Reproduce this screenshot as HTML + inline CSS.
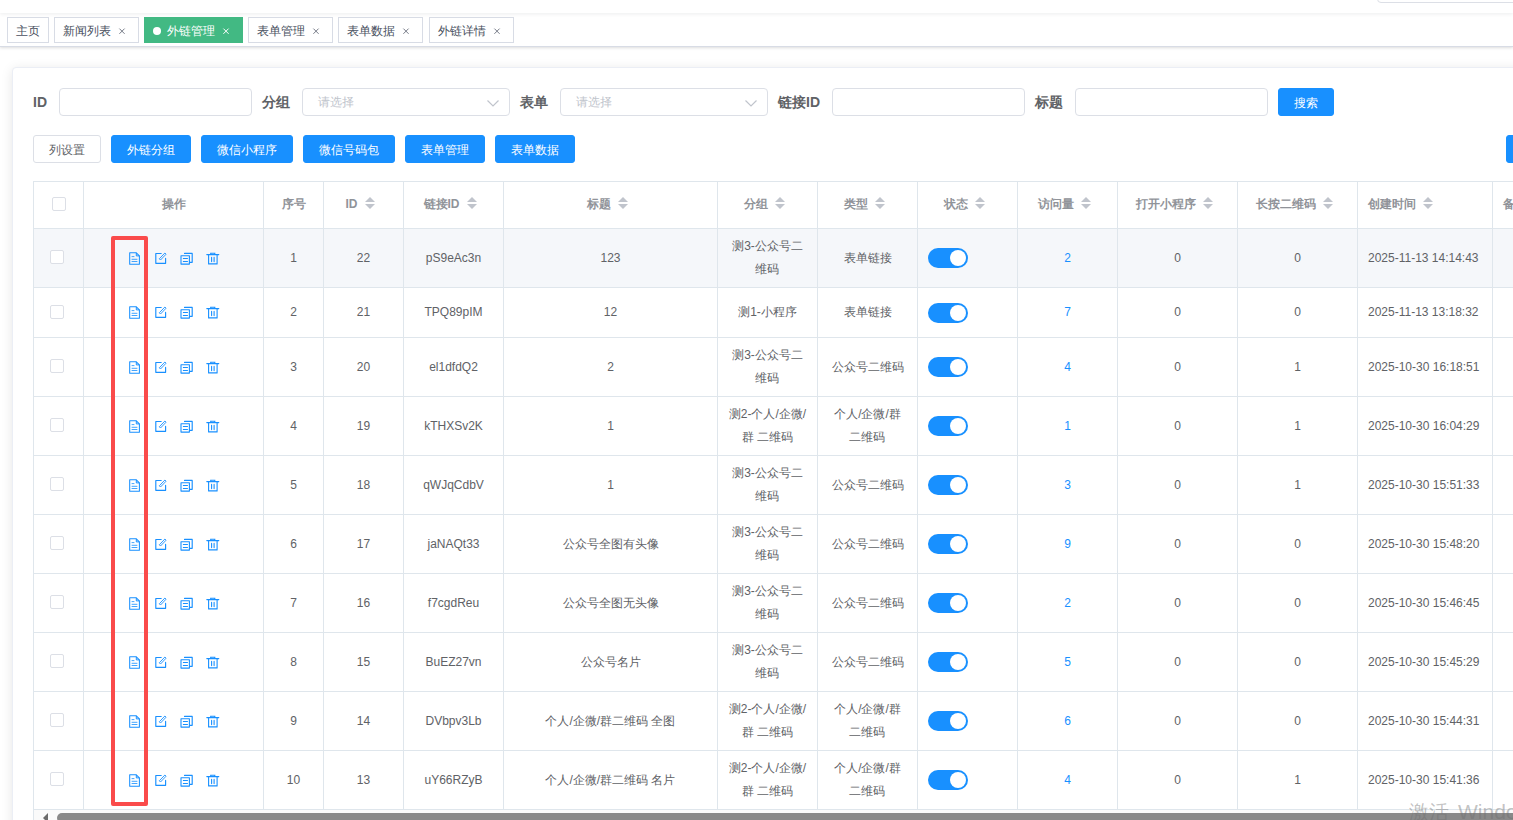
<!DOCTYPE html>
<html><head><meta charset="utf-8">
<style>
*{box-sizing:border-box;margin:0;padding:0}
html,body{width:1513px;height:820px;overflow:hidden;background:#fff;font-family:"Liberation Sans",sans-serif;color:#606266;font-size:12px}
.abs{position:absolute}
#nav{position:absolute;left:0;top:-37px;width:1513px;height:50px;background:#fff;box-shadow:0 1px 4px rgba(0,21,41,.08);z-index:2}
#topbox{position:absolute;left:1377px;top:-30px;width:200px;height:33px;border:1px solid #dcdfe6;border-radius:4px;background:#fff;z-index:3}
#tags{position:absolute;left:0;top:13px;width:1513px;height:34px;background:#fff;border-bottom:1px solid #d8dce5;box-shadow:0 1px 3px 0 rgba(0,0,0,.12),0 0 3px 0 rgba(0,0,0,.04)}
.tag{position:absolute;top:4px;height:26px;line-height:26px;border:1px solid #d8dce5;color:#495060;background:#fff;padding:0 8px;font-size:12px;white-space:nowrap}
.tag .x{position:absolute;right:8px;top:5px;width:16px;height:16px}
.tag.on{background:#42b983;border-color:#42b983;color:#fff}

.tag .dot{display:inline-block;width:8px;height:8px;border-radius:50%;background:#fff;margin-right:6px;vertical-align:0px}
#main{position:absolute;left:0;top:47px;width:1513px;height:773px;background:#fff}
#card{position:absolute;left:12px;top:67px;width:1560px;height:800px;border:1px solid #ebeef5;border-radius:4px;background:#fff;box-shadow:0 2px 12px 0 rgba(0,0,0,.1)}
.lbl{position:absolute;top:88px;height:28px;line-height:28px;font-size:14px;font-weight:bold;color:#606266}
.inp{position:absolute;top:88px;height:28px;border:1px solid #dcdfe6;border-radius:4px;background:#fff}
.ph{position:absolute;left:15px;top:0;line-height:26px;color:#c0c4cc;font-size:12px}
.arr{position:absolute;right:10px;top:11px}
.btn{position:absolute;top:135px;height:28px;line-height:28px;font-weight:500;border:1px solid #1890ff;background:#1890ff;color:#fff;border-radius:3px;text-align:center;font-size:12px}
.btn.def{background:#fff;border-color:#dcdfe6;color:#606266;font-weight:400}
.vl{position:absolute;width:1px;background:#dfe6ec}
.hl{position:absolute;height:1px;background:#dfe6ec}
.cell{position:absolute;display:flex;align-items:center;justify-content:center;text-align:center;line-height:23px;padding:0 10px;font-size:12px;color:#606266}
.cell.left{justify-content:flex-start;text-align:left}
.th{font-weight:bold;color:#909399}
.caret{display:inline-block;position:relative;width:24px;height:14px;vertical-align:middle}
.caret i{position:absolute;left:7px;width:0;height:0;border:5px solid transparent}
.caret i.up{top:-5px;border-bottom-color:#c0c4cc}
.caret i.dn{top:7px;border-top-color:#c0c4cc}
.cb{position:absolute;width:14px;height:14px;border:1px solid #dcdfe6;border-radius:2px;background:#fff}
.sw{position:absolute;width:40px;height:20px;border-radius:10px;background:#1890ff}
.sw:after{content:"";position:absolute;right:2px;top:2px;width:16px;height:16px;border-radius:50%;background:#fff}
.link{color:#1890ff}
.ico{position:absolute;line-height:0}
.ico svg{display:block}
#redbox{position:absolute;left:111px;top:236px;width:37px;height:570px;border:4px solid #fa4b4b;border-radius:2px}
#sbar{position:absolute;left:34px;top:810px;width:1479px;height:10px;background:#fafafa}
#thumb{position:absolute;left:57px;top:813px;width:1500px;height:10px;border-radius:5px;background:#898989}
#larr{position:absolute;left:43px;top:813px;width:0;height:0;border-top:5px solid transparent;border-bottom:5px solid transparent;border-right:5px solid #6b6b6b}
#wm{position:absolute;left:1409px;top:799px;font-size:20px;font-weight:300;color:rgba(110,110,110,.42);white-space:nowrap}
</style></head><body>
<div id="nav"></div><div id="topbox"></div>
<div id="main"></div>
<div id="tags">
 <div class="tag" style="left:7px;width:42px">主页</div>
 <div class="tag" style="left:54px;width:85px">新闻列表<svg class="x" viewBox="0 0 16 16"><path d="M5.4 5.6L10.6 10.8M10.6 5.6L5.4 10.8" stroke="#495060" stroke-width="1" opacity="0.75"/></svg></div>
 <div class="tag on" style="left:144px;width:99px"><span class="dot"></span>外链管理<svg class="x" viewBox="0 0 16 16"><path d="M5.4 5.6L10.6 10.8M10.6 5.6L5.4 10.8" stroke="#fff" stroke-width="1"/></svg></div>
 <div class="tag" style="left:248px;width:85px">表单管理<svg class="x" viewBox="0 0 16 16"><path d="M5.4 5.6L10.6 10.8M10.6 5.6L5.4 10.8" stroke="#495060" stroke-width="1" opacity="0.75"/></svg></div>
 <div class="tag" style="left:338px;width:85px">表单数据<svg class="x" viewBox="0 0 16 16"><path d="M5.4 5.6L10.6 10.8M10.6 5.6L5.4 10.8" stroke="#495060" stroke-width="1" opacity="0.75"/></svg></div>
 <div class="tag" style="left:429px;width:85px">外链详情<svg class="x" viewBox="0 0 16 16"><path d="M5.4 5.6L10.6 10.8M10.6 5.6L5.4 10.8" stroke="#495060" stroke-width="1" opacity="0.75"/></svg></div>
</div>
<div id="card"></div>

<div class="lbl" style="left:33px">ID</div><div class="inp" style="left:59px;width:193px"></div>
<div class="lbl" style="left:262px">分组</div><div class="inp" style="left:302px;width:208px"><span class="ph">请选择</span><svg class="arr" width="12" height="7" viewBox="0 0 12 7"><path d="M0.5 0.5L6 6 11.5 0.5" fill="none" stroke="#c0c4cc" stroke-width="1.2"/></svg></div>
<div class="lbl" style="left:520px">表单</div><div class="inp" style="left:560px;width:208px"><span class="ph">请选择</span><svg class="arr" width="12" height="7" viewBox="0 0 12 7"><path d="M0.5 0.5L6 6 11.5 0.5" fill="none" stroke="#c0c4cc" stroke-width="1.2"/></svg></div>
<div class="lbl" style="left:778px">链接ID</div><div class="inp" style="left:832px;width:193px"></div>
<div class="lbl" style="left:1035px">标题</div><div class="inp" style="left:1075px;width:193px"></div>
<div class="btn" style="left:1278px;top:88px;width:56px">搜索</div>
<div class="btn def" style="left:33px;width:68px">列设置</div>
<div class="btn" style="left:111px;width:80px">外链分组</div>
<div class="btn" style="left:201px;width:92px">微信小程序</div>
<div class="btn" style="left:303px;width:92px">微信号码包</div>
<div class="btn" style="left:405px;width:80px">表单管理</div>
<div class="btn" style="left:495px;width:80px">表单数据</div>
<div class="btn" style="left:1506px;width:80px"></div>
<div class="abs" style="left:34px;top:229px;width:1480px;height:58px;background:#f5f7fa"></div>
<div class="vl" style="left:33px;top:181px;height:629px"></div>
<div class="vl" style="left:83px;top:181px;height:629px"></div>
<div class="vl" style="left:263px;top:181px;height:629px"></div>
<div class="vl" style="left:323px;top:181px;height:629px"></div>
<div class="vl" style="left:403px;top:181px;height:629px"></div>
<div class="vl" style="left:503px;top:181px;height:629px"></div>
<div class="vl" style="left:717px;top:181px;height:629px"></div>
<div class="vl" style="left:817px;top:181px;height:629px"></div>
<div class="vl" style="left:917px;top:181px;height:629px"></div>
<div class="vl" style="left:1017px;top:181px;height:629px"></div>
<div class="vl" style="left:1117px;top:181px;height:629px"></div>
<div class="vl" style="left:1237px;top:181px;height:629px"></div>
<div class="vl" style="left:1357px;top:181px;height:629px"></div>
<div class="vl" style="left:1492px;top:181px;height:629px"></div>
<div class="hl" style="left:33px;top:181px;width:1480px"></div>
<div class="hl" style="left:33px;top:228px;width:1480px"></div>
<div class="hl" style="left:33px;top:287px;width:1480px"></div>
<div class="hl" style="left:33px;top:337px;width:1480px"></div>
<div class="hl" style="left:33px;top:396px;width:1480px"></div>
<div class="hl" style="left:33px;top:455px;width:1480px"></div>
<div class="hl" style="left:33px;top:514px;width:1480px"></div>
<div class="hl" style="left:33px;top:573px;width:1480px"></div>
<div class="hl" style="left:33px;top:632px;width:1480px"></div>
<div class="hl" style="left:33px;top:691px;width:1480px"></div>
<div class="hl" style="left:33px;top:750px;width:1480px"></div>
<div class="hl" style="left:33px;top:809px;width:1480px"></div>
<div class="cb" style="left:52px;top:197px"></div>
<div class="cell th" style="left:84px;top:181px;width:179px;height:46px">操作</div>
<div class="cell th" style="left:264px;top:181px;width:59px;height:46px">序号</div>
<div class="cell th" style="left:324px;top:181px;width:79px;height:46px">ID<span class="caret"><i class="up"></i><i class="dn"></i></span></div>
<div class="cell th" style="left:404px;top:181px;width:99px;height:46px">链接ID<span class="caret"><i class="up"></i><i class="dn"></i></span></div>
<div class="cell th" style="left:504px;top:181px;width:213px;height:46px">标题<span class="caret"><i class="up"></i><i class="dn"></i></span></div>
<div class="cell th" style="left:718px;top:181px;width:99px;height:46px">分组<span class="caret"><i class="up"></i><i class="dn"></i></span></div>
<div class="cell th" style="left:818px;top:181px;width:99px;height:46px">类型<span class="caret"><i class="up"></i><i class="dn"></i></span></div>
<div class="cell th" style="left:918px;top:181px;width:99px;height:46px">状态<span class="caret"><i class="up"></i><i class="dn"></i></span></div>
<div class="cell th" style="left:1018px;top:181px;width:99px;height:46px">访问量<span class="caret"><i class="up"></i><i class="dn"></i></span></div>
<div class="cell th" style="left:1118px;top:181px;width:119px;height:46px">打开小程序<span class="caret"><i class="up"></i><i class="dn"></i></span></div>
<div class="cell th" style="left:1238px;top:181px;width:119px;height:46px">长按二维码<span class="caret"><i class="up"></i><i class="dn"></i></span></div>
<div class="cell th left" style="left:1358px;top:181px;width:134px;height:46px">创建时间<span class="caret"><i class="up"></i><i class="dn"></i></span></div>
<div class="cell th left" style="left:1493px;top:181px;width:147px;height:46px">备注<span class="caret"><i class="up"></i><i class="dn"></i></span></div>
<div class="cb" style="left:50px;top:250px"></div>
<span class="ico" style="left:127px;top:250px"><svg width="16" height="16" viewBox="0 0 16 16"><path d="M2.7 2.8H9.3L12.4 5.9V14.3H2.7Z" fill="none" stroke="#1890ff" stroke-width="1.05" stroke-linejoin="round"/><path d="M9.3 2.8V5.9H12.4" fill="none" stroke="#1890ff" stroke-width="1"/><path d="M5 6.6H7M5 9.3H10M5 11.5H10" stroke="#1890ff" stroke-width="0.95" stroke-linecap="round" opacity="0.85"/></svg></span>
<span class="ico" style="left:153px;top:250px"><svg width="16" height="16" viewBox="0 0 16 16"><path d="M8.2 3.5H2.8V13.3H12.6V8.4" fill="none" stroke="#1890ff" stroke-width="1.15" stroke-linecap="round" stroke-linejoin="round"/><path d="M7.5 10L13.1 4.2L11.9 3L6.3 8.8Z" fill="none" stroke="#1890ff" stroke-width="0.9" stroke-linejoin="round"/></svg></span>
<span class="ico" style="left:178px;top:250px"><svg width="16" height="16" viewBox="0 0 16 16"><path d="M3 5.7H11.4V14.1H3Z" fill="none" stroke="#1890ff" stroke-width="1.1" stroke-linejoin="round"/><path d="M6.5 3.4H14.2V12.3H12" fill="none" stroke="#1890ff" stroke-width="1.15" stroke-linecap="round" stroke-linejoin="round"/><path d="M5.3 8.5H9.5M5.3 11.5H9.5" stroke="#1890ff" stroke-width="1" stroke-linecap="round"/></svg></span>
<span class="ico" style="left:204px;top:250px"><svg width="16" height="16" viewBox="0 0 16 16"><path d="M2.8 4.6H14.8" stroke="#1890ff" stroke-width="1.1" stroke-linecap="round"/><path d="M6.7 4.6V3.2H10.8V4.6" fill="none" stroke="#1890ff" stroke-width="1.1"/><path d="M4.6 4.8V13.9H13.1V4.8" fill="none" stroke="#1890ff" stroke-width="1.1" stroke-linejoin="round"/><path d="M7.6 7.4V11.6M10.1 7.4V11.6" stroke="#1890ff" stroke-width="1.1" stroke-linecap="round"/></svg></span>
<div class="cell" style="left:264px;top:229px;width:59px;height:58px">1</div>
<div class="cell" style="left:324px;top:229px;width:79px;height:58px">22</div>
<div class="cell" style="left:404px;top:229px;width:99px;height:58px">pS9eAc3n</div>
<div class="cell" style="left:504px;top:229px;width:213px;height:58px">123</div>
<div class="cell" style="left:718px;top:229px;width:99px;height:58px">测3-公众号二<br>维码</div>
<div class="cell" style="left:818px;top:229px;width:99px;height:58px">表单链接</div>
<div class="cell" style="left:1018px;top:229px;width:99px;height:58px"><span class="link">2</span></div>
<div class="cell" style="left:1118px;top:229px;width:119px;height:58px">0</div>
<div class="cell" style="left:1238px;top:229px;width:119px;height:58px">0</div>
<div class="cell left" style="left:1358px;top:229px;width:134px;height:58px">2025-11-13 14:14:43</div>
<div class="sw" style="left:928px;top:248px"></div>
<div class="cb" style="left:50px;top:305px"></div>
<span class="ico" style="left:127px;top:304px"><svg width="16" height="16" viewBox="0 0 16 16"><path d="M2.7 2.8H9.3L12.4 5.9V14.3H2.7Z" fill="none" stroke="#1890ff" stroke-width="1.05" stroke-linejoin="round"/><path d="M9.3 2.8V5.9H12.4" fill="none" stroke="#1890ff" stroke-width="1"/><path d="M5 6.6H7M5 9.3H10M5 11.5H10" stroke="#1890ff" stroke-width="0.95" stroke-linecap="round" opacity="0.85"/></svg></span>
<span class="ico" style="left:153px;top:304px"><svg width="16" height="16" viewBox="0 0 16 16"><path d="M8.2 3.5H2.8V13.3H12.6V8.4" fill="none" stroke="#1890ff" stroke-width="1.15" stroke-linecap="round" stroke-linejoin="round"/><path d="M7.5 10L13.1 4.2L11.9 3L6.3 8.8Z" fill="none" stroke="#1890ff" stroke-width="0.9" stroke-linejoin="round"/></svg></span>
<span class="ico" style="left:178px;top:304px"><svg width="16" height="16" viewBox="0 0 16 16"><path d="M3 5.7H11.4V14.1H3Z" fill="none" stroke="#1890ff" stroke-width="1.1" stroke-linejoin="round"/><path d="M6.5 3.4H14.2V12.3H12" fill="none" stroke="#1890ff" stroke-width="1.15" stroke-linecap="round" stroke-linejoin="round"/><path d="M5.3 8.5H9.5M5.3 11.5H9.5" stroke="#1890ff" stroke-width="1" stroke-linecap="round"/></svg></span>
<span class="ico" style="left:204px;top:304px"><svg width="16" height="16" viewBox="0 0 16 16"><path d="M2.8 4.6H14.8" stroke="#1890ff" stroke-width="1.1" stroke-linecap="round"/><path d="M6.7 4.6V3.2H10.8V4.6" fill="none" stroke="#1890ff" stroke-width="1.1"/><path d="M4.6 4.8V13.9H13.1V4.8" fill="none" stroke="#1890ff" stroke-width="1.1" stroke-linejoin="round"/><path d="M7.6 7.4V11.6M10.1 7.4V11.6" stroke="#1890ff" stroke-width="1.1" stroke-linecap="round"/></svg></span>
<div class="cell" style="left:264px;top:288px;width:59px;height:49px">2</div>
<div class="cell" style="left:324px;top:288px;width:79px;height:49px">21</div>
<div class="cell" style="left:404px;top:288px;width:99px;height:49px">TPQ89pIM</div>
<div class="cell" style="left:504px;top:288px;width:213px;height:49px">12</div>
<div class="cell" style="left:718px;top:288px;width:99px;height:49px">测1-小程序</div>
<div class="cell" style="left:818px;top:288px;width:99px;height:49px">表单链接</div>
<div class="cell" style="left:1018px;top:288px;width:99px;height:49px"><span class="link">7</span></div>
<div class="cell" style="left:1118px;top:288px;width:119px;height:49px">0</div>
<div class="cell" style="left:1238px;top:288px;width:119px;height:49px">0</div>
<div class="cell left" style="left:1358px;top:288px;width:134px;height:49px">2025-11-13 13:18:32</div>
<div class="sw" style="left:928px;top:303px"></div>
<div class="cb" style="left:50px;top:359px"></div>
<span class="ico" style="left:127px;top:359px"><svg width="16" height="16" viewBox="0 0 16 16"><path d="M2.7 2.8H9.3L12.4 5.9V14.3H2.7Z" fill="none" stroke="#1890ff" stroke-width="1.05" stroke-linejoin="round"/><path d="M9.3 2.8V5.9H12.4" fill="none" stroke="#1890ff" stroke-width="1"/><path d="M5 6.6H7M5 9.3H10M5 11.5H10" stroke="#1890ff" stroke-width="0.95" stroke-linecap="round" opacity="0.85"/></svg></span>
<span class="ico" style="left:153px;top:359px"><svg width="16" height="16" viewBox="0 0 16 16"><path d="M8.2 3.5H2.8V13.3H12.6V8.4" fill="none" stroke="#1890ff" stroke-width="1.15" stroke-linecap="round" stroke-linejoin="round"/><path d="M7.5 10L13.1 4.2L11.9 3L6.3 8.8Z" fill="none" stroke="#1890ff" stroke-width="0.9" stroke-linejoin="round"/></svg></span>
<span class="ico" style="left:178px;top:359px"><svg width="16" height="16" viewBox="0 0 16 16"><path d="M3 5.7H11.4V14.1H3Z" fill="none" stroke="#1890ff" stroke-width="1.1" stroke-linejoin="round"/><path d="M6.5 3.4H14.2V12.3H12" fill="none" stroke="#1890ff" stroke-width="1.15" stroke-linecap="round" stroke-linejoin="round"/><path d="M5.3 8.5H9.5M5.3 11.5H9.5" stroke="#1890ff" stroke-width="1" stroke-linecap="round"/></svg></span>
<span class="ico" style="left:204px;top:359px"><svg width="16" height="16" viewBox="0 0 16 16"><path d="M2.8 4.6H14.8" stroke="#1890ff" stroke-width="1.1" stroke-linecap="round"/><path d="M6.7 4.6V3.2H10.8V4.6" fill="none" stroke="#1890ff" stroke-width="1.1"/><path d="M4.6 4.8V13.9H13.1V4.8" fill="none" stroke="#1890ff" stroke-width="1.1" stroke-linejoin="round"/><path d="M7.6 7.4V11.6M10.1 7.4V11.6" stroke="#1890ff" stroke-width="1.1" stroke-linecap="round"/></svg></span>
<div class="cell" style="left:264px;top:338px;width:59px;height:58px">3</div>
<div class="cell" style="left:324px;top:338px;width:79px;height:58px">20</div>
<div class="cell" style="left:404px;top:338px;width:99px;height:58px">el1dfdQ2</div>
<div class="cell" style="left:504px;top:338px;width:213px;height:58px">2</div>
<div class="cell" style="left:718px;top:338px;width:99px;height:58px">测3-公众号二<br>维码</div>
<div class="cell" style="left:818px;top:338px;width:99px;height:58px">公众号二维码</div>
<div class="cell" style="left:1018px;top:338px;width:99px;height:58px"><span class="link">4</span></div>
<div class="cell" style="left:1118px;top:338px;width:119px;height:58px">0</div>
<div class="cell" style="left:1238px;top:338px;width:119px;height:58px">1</div>
<div class="cell left" style="left:1358px;top:338px;width:134px;height:58px">2025-10-30 16:18:51</div>
<div class="sw" style="left:928px;top:357px"></div>
<div class="cb" style="left:50px;top:418px"></div>
<span class="ico" style="left:127px;top:418px"><svg width="16" height="16" viewBox="0 0 16 16"><path d="M2.7 2.8H9.3L12.4 5.9V14.3H2.7Z" fill="none" stroke="#1890ff" stroke-width="1.05" stroke-linejoin="round"/><path d="M9.3 2.8V5.9H12.4" fill="none" stroke="#1890ff" stroke-width="1"/><path d="M5 6.6H7M5 9.3H10M5 11.5H10" stroke="#1890ff" stroke-width="0.95" stroke-linecap="round" opacity="0.85"/></svg></span>
<span class="ico" style="left:153px;top:418px"><svg width="16" height="16" viewBox="0 0 16 16"><path d="M8.2 3.5H2.8V13.3H12.6V8.4" fill="none" stroke="#1890ff" stroke-width="1.15" stroke-linecap="round" stroke-linejoin="round"/><path d="M7.5 10L13.1 4.2L11.9 3L6.3 8.8Z" fill="none" stroke="#1890ff" stroke-width="0.9" stroke-linejoin="round"/></svg></span>
<span class="ico" style="left:178px;top:418px"><svg width="16" height="16" viewBox="0 0 16 16"><path d="M3 5.7H11.4V14.1H3Z" fill="none" stroke="#1890ff" stroke-width="1.1" stroke-linejoin="round"/><path d="M6.5 3.4H14.2V12.3H12" fill="none" stroke="#1890ff" stroke-width="1.15" stroke-linecap="round" stroke-linejoin="round"/><path d="M5.3 8.5H9.5M5.3 11.5H9.5" stroke="#1890ff" stroke-width="1" stroke-linecap="round"/></svg></span>
<span class="ico" style="left:204px;top:418px"><svg width="16" height="16" viewBox="0 0 16 16"><path d="M2.8 4.6H14.8" stroke="#1890ff" stroke-width="1.1" stroke-linecap="round"/><path d="M6.7 4.6V3.2H10.8V4.6" fill="none" stroke="#1890ff" stroke-width="1.1"/><path d="M4.6 4.8V13.9H13.1V4.8" fill="none" stroke="#1890ff" stroke-width="1.1" stroke-linejoin="round"/><path d="M7.6 7.4V11.6M10.1 7.4V11.6" stroke="#1890ff" stroke-width="1.1" stroke-linecap="round"/></svg></span>
<div class="cell" style="left:264px;top:397px;width:59px;height:58px">4</div>
<div class="cell" style="left:324px;top:397px;width:79px;height:58px">19</div>
<div class="cell" style="left:404px;top:397px;width:99px;height:58px">kTHXSv2K</div>
<div class="cell" style="left:504px;top:397px;width:213px;height:58px">1</div>
<div class="cell" style="left:718px;top:397px;width:99px;height:58px">测2-个人/企微/<br>群 二维码</div>
<div class="cell" style="left:818px;top:397px;width:99px;height:58px">个人/企微/群<br>二维码</div>
<div class="cell" style="left:1018px;top:397px;width:99px;height:58px"><span class="link">1</span></div>
<div class="cell" style="left:1118px;top:397px;width:119px;height:58px">0</div>
<div class="cell" style="left:1238px;top:397px;width:119px;height:58px">1</div>
<div class="cell left" style="left:1358px;top:397px;width:134px;height:58px">2025-10-30 16:04:29</div>
<div class="sw" style="left:928px;top:416px"></div>
<div class="cb" style="left:50px;top:477px"></div>
<span class="ico" style="left:127px;top:477px"><svg width="16" height="16" viewBox="0 0 16 16"><path d="M2.7 2.8H9.3L12.4 5.9V14.3H2.7Z" fill="none" stroke="#1890ff" stroke-width="1.05" stroke-linejoin="round"/><path d="M9.3 2.8V5.9H12.4" fill="none" stroke="#1890ff" stroke-width="1"/><path d="M5 6.6H7M5 9.3H10M5 11.5H10" stroke="#1890ff" stroke-width="0.95" stroke-linecap="round" opacity="0.85"/></svg></span>
<span class="ico" style="left:153px;top:477px"><svg width="16" height="16" viewBox="0 0 16 16"><path d="M8.2 3.5H2.8V13.3H12.6V8.4" fill="none" stroke="#1890ff" stroke-width="1.15" stroke-linecap="round" stroke-linejoin="round"/><path d="M7.5 10L13.1 4.2L11.9 3L6.3 8.8Z" fill="none" stroke="#1890ff" stroke-width="0.9" stroke-linejoin="round"/></svg></span>
<span class="ico" style="left:178px;top:477px"><svg width="16" height="16" viewBox="0 0 16 16"><path d="M3 5.7H11.4V14.1H3Z" fill="none" stroke="#1890ff" stroke-width="1.1" stroke-linejoin="round"/><path d="M6.5 3.4H14.2V12.3H12" fill="none" stroke="#1890ff" stroke-width="1.15" stroke-linecap="round" stroke-linejoin="round"/><path d="M5.3 8.5H9.5M5.3 11.5H9.5" stroke="#1890ff" stroke-width="1" stroke-linecap="round"/></svg></span>
<span class="ico" style="left:204px;top:477px"><svg width="16" height="16" viewBox="0 0 16 16"><path d="M2.8 4.6H14.8" stroke="#1890ff" stroke-width="1.1" stroke-linecap="round"/><path d="M6.7 4.6V3.2H10.8V4.6" fill="none" stroke="#1890ff" stroke-width="1.1"/><path d="M4.6 4.8V13.9H13.1V4.8" fill="none" stroke="#1890ff" stroke-width="1.1" stroke-linejoin="round"/><path d="M7.6 7.4V11.6M10.1 7.4V11.6" stroke="#1890ff" stroke-width="1.1" stroke-linecap="round"/></svg></span>
<div class="cell" style="left:264px;top:456px;width:59px;height:58px">5</div>
<div class="cell" style="left:324px;top:456px;width:79px;height:58px">18</div>
<div class="cell" style="left:404px;top:456px;width:99px;height:58px">qWJqCdbV</div>
<div class="cell" style="left:504px;top:456px;width:213px;height:58px">1</div>
<div class="cell" style="left:718px;top:456px;width:99px;height:58px">测3-公众号二<br>维码</div>
<div class="cell" style="left:818px;top:456px;width:99px;height:58px">公众号二维码</div>
<div class="cell" style="left:1018px;top:456px;width:99px;height:58px"><span class="link">3</span></div>
<div class="cell" style="left:1118px;top:456px;width:119px;height:58px">0</div>
<div class="cell" style="left:1238px;top:456px;width:119px;height:58px">1</div>
<div class="cell left" style="left:1358px;top:456px;width:134px;height:58px">2025-10-30 15:51:33</div>
<div class="sw" style="left:928px;top:475px"></div>
<div class="cb" style="left:50px;top:536px"></div>
<span class="ico" style="left:127px;top:536px"><svg width="16" height="16" viewBox="0 0 16 16"><path d="M2.7 2.8H9.3L12.4 5.9V14.3H2.7Z" fill="none" stroke="#1890ff" stroke-width="1.05" stroke-linejoin="round"/><path d="M9.3 2.8V5.9H12.4" fill="none" stroke="#1890ff" stroke-width="1"/><path d="M5 6.6H7M5 9.3H10M5 11.5H10" stroke="#1890ff" stroke-width="0.95" stroke-linecap="round" opacity="0.85"/></svg></span>
<span class="ico" style="left:153px;top:536px"><svg width="16" height="16" viewBox="0 0 16 16"><path d="M8.2 3.5H2.8V13.3H12.6V8.4" fill="none" stroke="#1890ff" stroke-width="1.15" stroke-linecap="round" stroke-linejoin="round"/><path d="M7.5 10L13.1 4.2L11.9 3L6.3 8.8Z" fill="none" stroke="#1890ff" stroke-width="0.9" stroke-linejoin="round"/></svg></span>
<span class="ico" style="left:178px;top:536px"><svg width="16" height="16" viewBox="0 0 16 16"><path d="M3 5.7H11.4V14.1H3Z" fill="none" stroke="#1890ff" stroke-width="1.1" stroke-linejoin="round"/><path d="M6.5 3.4H14.2V12.3H12" fill="none" stroke="#1890ff" stroke-width="1.15" stroke-linecap="round" stroke-linejoin="round"/><path d="M5.3 8.5H9.5M5.3 11.5H9.5" stroke="#1890ff" stroke-width="1" stroke-linecap="round"/></svg></span>
<span class="ico" style="left:204px;top:536px"><svg width="16" height="16" viewBox="0 0 16 16"><path d="M2.8 4.6H14.8" stroke="#1890ff" stroke-width="1.1" stroke-linecap="round"/><path d="M6.7 4.6V3.2H10.8V4.6" fill="none" stroke="#1890ff" stroke-width="1.1"/><path d="M4.6 4.8V13.9H13.1V4.8" fill="none" stroke="#1890ff" stroke-width="1.1" stroke-linejoin="round"/><path d="M7.6 7.4V11.6M10.1 7.4V11.6" stroke="#1890ff" stroke-width="1.1" stroke-linecap="round"/></svg></span>
<div class="cell" style="left:264px;top:515px;width:59px;height:58px">6</div>
<div class="cell" style="left:324px;top:515px;width:79px;height:58px">17</div>
<div class="cell" style="left:404px;top:515px;width:99px;height:58px">jaNAQt33</div>
<div class="cell" style="left:504px;top:515px;width:213px;height:58px">公众号全图有头像</div>
<div class="cell" style="left:718px;top:515px;width:99px;height:58px">测3-公众号二<br>维码</div>
<div class="cell" style="left:818px;top:515px;width:99px;height:58px">公众号二维码</div>
<div class="cell" style="left:1018px;top:515px;width:99px;height:58px"><span class="link">9</span></div>
<div class="cell" style="left:1118px;top:515px;width:119px;height:58px">0</div>
<div class="cell" style="left:1238px;top:515px;width:119px;height:58px">0</div>
<div class="cell left" style="left:1358px;top:515px;width:134px;height:58px">2025-10-30 15:48:20</div>
<div class="sw" style="left:928px;top:534px"></div>
<div class="cb" style="left:50px;top:595px"></div>
<span class="ico" style="left:127px;top:595px"><svg width="16" height="16" viewBox="0 0 16 16"><path d="M2.7 2.8H9.3L12.4 5.9V14.3H2.7Z" fill="none" stroke="#1890ff" stroke-width="1.05" stroke-linejoin="round"/><path d="M9.3 2.8V5.9H12.4" fill="none" stroke="#1890ff" stroke-width="1"/><path d="M5 6.6H7M5 9.3H10M5 11.5H10" stroke="#1890ff" stroke-width="0.95" stroke-linecap="round" opacity="0.85"/></svg></span>
<span class="ico" style="left:153px;top:595px"><svg width="16" height="16" viewBox="0 0 16 16"><path d="M8.2 3.5H2.8V13.3H12.6V8.4" fill="none" stroke="#1890ff" stroke-width="1.15" stroke-linecap="round" stroke-linejoin="round"/><path d="M7.5 10L13.1 4.2L11.9 3L6.3 8.8Z" fill="none" stroke="#1890ff" stroke-width="0.9" stroke-linejoin="round"/></svg></span>
<span class="ico" style="left:178px;top:595px"><svg width="16" height="16" viewBox="0 0 16 16"><path d="M3 5.7H11.4V14.1H3Z" fill="none" stroke="#1890ff" stroke-width="1.1" stroke-linejoin="round"/><path d="M6.5 3.4H14.2V12.3H12" fill="none" stroke="#1890ff" stroke-width="1.15" stroke-linecap="round" stroke-linejoin="round"/><path d="M5.3 8.5H9.5M5.3 11.5H9.5" stroke="#1890ff" stroke-width="1" stroke-linecap="round"/></svg></span>
<span class="ico" style="left:204px;top:595px"><svg width="16" height="16" viewBox="0 0 16 16"><path d="M2.8 4.6H14.8" stroke="#1890ff" stroke-width="1.1" stroke-linecap="round"/><path d="M6.7 4.6V3.2H10.8V4.6" fill="none" stroke="#1890ff" stroke-width="1.1"/><path d="M4.6 4.8V13.9H13.1V4.8" fill="none" stroke="#1890ff" stroke-width="1.1" stroke-linejoin="round"/><path d="M7.6 7.4V11.6M10.1 7.4V11.6" stroke="#1890ff" stroke-width="1.1" stroke-linecap="round"/></svg></span>
<div class="cell" style="left:264px;top:574px;width:59px;height:58px">7</div>
<div class="cell" style="left:324px;top:574px;width:79px;height:58px">16</div>
<div class="cell" style="left:404px;top:574px;width:99px;height:58px">f7cgdReu</div>
<div class="cell" style="left:504px;top:574px;width:213px;height:58px">公众号全图无头像</div>
<div class="cell" style="left:718px;top:574px;width:99px;height:58px">测3-公众号二<br>维码</div>
<div class="cell" style="left:818px;top:574px;width:99px;height:58px">公众号二维码</div>
<div class="cell" style="left:1018px;top:574px;width:99px;height:58px"><span class="link">2</span></div>
<div class="cell" style="left:1118px;top:574px;width:119px;height:58px">0</div>
<div class="cell" style="left:1238px;top:574px;width:119px;height:58px">0</div>
<div class="cell left" style="left:1358px;top:574px;width:134px;height:58px">2025-10-30 15:46:45</div>
<div class="sw" style="left:928px;top:593px"></div>
<div class="cb" style="left:50px;top:654px"></div>
<span class="ico" style="left:127px;top:654px"><svg width="16" height="16" viewBox="0 0 16 16"><path d="M2.7 2.8H9.3L12.4 5.9V14.3H2.7Z" fill="none" stroke="#1890ff" stroke-width="1.05" stroke-linejoin="round"/><path d="M9.3 2.8V5.9H12.4" fill="none" stroke="#1890ff" stroke-width="1"/><path d="M5 6.6H7M5 9.3H10M5 11.5H10" stroke="#1890ff" stroke-width="0.95" stroke-linecap="round" opacity="0.85"/></svg></span>
<span class="ico" style="left:153px;top:654px"><svg width="16" height="16" viewBox="0 0 16 16"><path d="M8.2 3.5H2.8V13.3H12.6V8.4" fill="none" stroke="#1890ff" stroke-width="1.15" stroke-linecap="round" stroke-linejoin="round"/><path d="M7.5 10L13.1 4.2L11.9 3L6.3 8.8Z" fill="none" stroke="#1890ff" stroke-width="0.9" stroke-linejoin="round"/></svg></span>
<span class="ico" style="left:178px;top:654px"><svg width="16" height="16" viewBox="0 0 16 16"><path d="M3 5.7H11.4V14.1H3Z" fill="none" stroke="#1890ff" stroke-width="1.1" stroke-linejoin="round"/><path d="M6.5 3.4H14.2V12.3H12" fill="none" stroke="#1890ff" stroke-width="1.15" stroke-linecap="round" stroke-linejoin="round"/><path d="M5.3 8.5H9.5M5.3 11.5H9.5" stroke="#1890ff" stroke-width="1" stroke-linecap="round"/></svg></span>
<span class="ico" style="left:204px;top:654px"><svg width="16" height="16" viewBox="0 0 16 16"><path d="M2.8 4.6H14.8" stroke="#1890ff" stroke-width="1.1" stroke-linecap="round"/><path d="M6.7 4.6V3.2H10.8V4.6" fill="none" stroke="#1890ff" stroke-width="1.1"/><path d="M4.6 4.8V13.9H13.1V4.8" fill="none" stroke="#1890ff" stroke-width="1.1" stroke-linejoin="round"/><path d="M7.6 7.4V11.6M10.1 7.4V11.6" stroke="#1890ff" stroke-width="1.1" stroke-linecap="round"/></svg></span>
<div class="cell" style="left:264px;top:633px;width:59px;height:58px">8</div>
<div class="cell" style="left:324px;top:633px;width:79px;height:58px">15</div>
<div class="cell" style="left:404px;top:633px;width:99px;height:58px">BuEZ27vn</div>
<div class="cell" style="left:504px;top:633px;width:213px;height:58px">公众号名片</div>
<div class="cell" style="left:718px;top:633px;width:99px;height:58px">测3-公众号二<br>维码</div>
<div class="cell" style="left:818px;top:633px;width:99px;height:58px">公众号二维码</div>
<div class="cell" style="left:1018px;top:633px;width:99px;height:58px"><span class="link">5</span></div>
<div class="cell" style="left:1118px;top:633px;width:119px;height:58px">0</div>
<div class="cell" style="left:1238px;top:633px;width:119px;height:58px">0</div>
<div class="cell left" style="left:1358px;top:633px;width:134px;height:58px">2025-10-30 15:45:29</div>
<div class="sw" style="left:928px;top:652px"></div>
<div class="cb" style="left:50px;top:713px"></div>
<span class="ico" style="left:127px;top:713px"><svg width="16" height="16" viewBox="0 0 16 16"><path d="M2.7 2.8H9.3L12.4 5.9V14.3H2.7Z" fill="none" stroke="#1890ff" stroke-width="1.05" stroke-linejoin="round"/><path d="M9.3 2.8V5.9H12.4" fill="none" stroke="#1890ff" stroke-width="1"/><path d="M5 6.6H7M5 9.3H10M5 11.5H10" stroke="#1890ff" stroke-width="0.95" stroke-linecap="round" opacity="0.85"/></svg></span>
<span class="ico" style="left:153px;top:713px"><svg width="16" height="16" viewBox="0 0 16 16"><path d="M8.2 3.5H2.8V13.3H12.6V8.4" fill="none" stroke="#1890ff" stroke-width="1.15" stroke-linecap="round" stroke-linejoin="round"/><path d="M7.5 10L13.1 4.2L11.9 3L6.3 8.8Z" fill="none" stroke="#1890ff" stroke-width="0.9" stroke-linejoin="round"/></svg></span>
<span class="ico" style="left:178px;top:713px"><svg width="16" height="16" viewBox="0 0 16 16"><path d="M3 5.7H11.4V14.1H3Z" fill="none" stroke="#1890ff" stroke-width="1.1" stroke-linejoin="round"/><path d="M6.5 3.4H14.2V12.3H12" fill="none" stroke="#1890ff" stroke-width="1.15" stroke-linecap="round" stroke-linejoin="round"/><path d="M5.3 8.5H9.5M5.3 11.5H9.5" stroke="#1890ff" stroke-width="1" stroke-linecap="round"/></svg></span>
<span class="ico" style="left:204px;top:713px"><svg width="16" height="16" viewBox="0 0 16 16"><path d="M2.8 4.6H14.8" stroke="#1890ff" stroke-width="1.1" stroke-linecap="round"/><path d="M6.7 4.6V3.2H10.8V4.6" fill="none" stroke="#1890ff" stroke-width="1.1"/><path d="M4.6 4.8V13.9H13.1V4.8" fill="none" stroke="#1890ff" stroke-width="1.1" stroke-linejoin="round"/><path d="M7.6 7.4V11.6M10.1 7.4V11.6" stroke="#1890ff" stroke-width="1.1" stroke-linecap="round"/></svg></span>
<div class="cell" style="left:264px;top:692px;width:59px;height:58px">9</div>
<div class="cell" style="left:324px;top:692px;width:79px;height:58px">14</div>
<div class="cell" style="left:404px;top:692px;width:99px;height:58px">DVbpv3Lb</div>
<div class="cell" style="left:504px;top:692px;width:213px;height:58px">个人/企微/群二维码 全图</div>
<div class="cell" style="left:718px;top:692px;width:99px;height:58px">测2-个人/企微/<br>群 二维码</div>
<div class="cell" style="left:818px;top:692px;width:99px;height:58px">个人/企微/群<br>二维码</div>
<div class="cell" style="left:1018px;top:692px;width:99px;height:58px"><span class="link">6</span></div>
<div class="cell" style="left:1118px;top:692px;width:119px;height:58px">0</div>
<div class="cell" style="left:1238px;top:692px;width:119px;height:58px">0</div>
<div class="cell left" style="left:1358px;top:692px;width:134px;height:58px">2025-10-30 15:44:31</div>
<div class="sw" style="left:928px;top:711px"></div>
<div class="cb" style="left:50px;top:772px"></div>
<span class="ico" style="left:127px;top:772px"><svg width="16" height="16" viewBox="0 0 16 16"><path d="M2.7 2.8H9.3L12.4 5.9V14.3H2.7Z" fill="none" stroke="#1890ff" stroke-width="1.05" stroke-linejoin="round"/><path d="M9.3 2.8V5.9H12.4" fill="none" stroke="#1890ff" stroke-width="1"/><path d="M5 6.6H7M5 9.3H10M5 11.5H10" stroke="#1890ff" stroke-width="0.95" stroke-linecap="round" opacity="0.85"/></svg></span>
<span class="ico" style="left:153px;top:772px"><svg width="16" height="16" viewBox="0 0 16 16"><path d="M8.2 3.5H2.8V13.3H12.6V8.4" fill="none" stroke="#1890ff" stroke-width="1.15" stroke-linecap="round" stroke-linejoin="round"/><path d="M7.5 10L13.1 4.2L11.9 3L6.3 8.8Z" fill="none" stroke="#1890ff" stroke-width="0.9" stroke-linejoin="round"/></svg></span>
<span class="ico" style="left:178px;top:772px"><svg width="16" height="16" viewBox="0 0 16 16"><path d="M3 5.7H11.4V14.1H3Z" fill="none" stroke="#1890ff" stroke-width="1.1" stroke-linejoin="round"/><path d="M6.5 3.4H14.2V12.3H12" fill="none" stroke="#1890ff" stroke-width="1.15" stroke-linecap="round" stroke-linejoin="round"/><path d="M5.3 8.5H9.5M5.3 11.5H9.5" stroke="#1890ff" stroke-width="1" stroke-linecap="round"/></svg></span>
<span class="ico" style="left:204px;top:772px"><svg width="16" height="16" viewBox="0 0 16 16"><path d="M2.8 4.6H14.8" stroke="#1890ff" stroke-width="1.1" stroke-linecap="round"/><path d="M6.7 4.6V3.2H10.8V4.6" fill="none" stroke="#1890ff" stroke-width="1.1"/><path d="M4.6 4.8V13.9H13.1V4.8" fill="none" stroke="#1890ff" stroke-width="1.1" stroke-linejoin="round"/><path d="M7.6 7.4V11.6M10.1 7.4V11.6" stroke="#1890ff" stroke-width="1.1" stroke-linecap="round"/></svg></span>
<div class="cell" style="left:264px;top:751px;width:59px;height:58px">10</div>
<div class="cell" style="left:324px;top:751px;width:79px;height:58px">13</div>
<div class="cell" style="left:404px;top:751px;width:99px;height:58px">uY66RZyB</div>
<div class="cell" style="left:504px;top:751px;width:213px;height:58px">个人/企微/群二维码 名片</div>
<div class="cell" style="left:718px;top:751px;width:99px;height:58px">测2-个人/企微/<br>群 二维码</div>
<div class="cell" style="left:818px;top:751px;width:99px;height:58px">个人/企微/群<br>二维码</div>
<div class="cell" style="left:1018px;top:751px;width:99px;height:58px"><span class="link">4</span></div>
<div class="cell" style="left:1118px;top:751px;width:119px;height:58px">0</div>
<div class="cell" style="left:1238px;top:751px;width:119px;height:58px">1</div>
<div class="cell left" style="left:1358px;top:751px;width:134px;height:58px">2025-10-30 15:41:36</div>
<div class="sw" style="left:928px;top:770px"></div>
<div id="redbox"></div>
<div id="sbar"></div><div id="larr"></div><div id="thumb"></div><div class="vl" style="left:33px;top:809px;height:11px"></div>
<div id="wm">激活<span style="margin-left:9px;font-size:21px">Windows</span></div>
</body></html>
